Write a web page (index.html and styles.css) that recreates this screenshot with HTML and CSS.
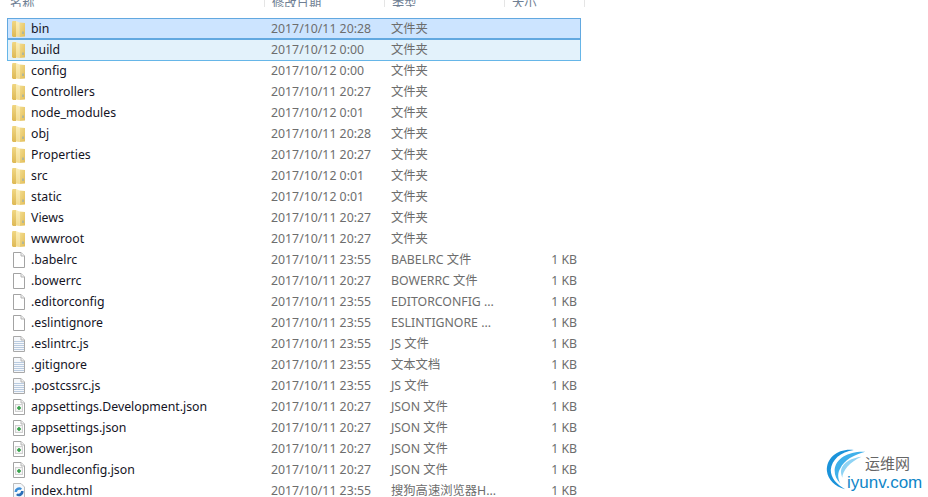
FILE: index.html
```html
<!DOCTYPE html>
<html lang="zh-CN">
<head>
    <meta charset="UTF-8">
    <title>文件列表</title>
    <link rel="stylesheet" href="styles.css">
</head>
<body>
    <svg class="icon-defs" width="0" height="0">
        <defs>
            <linearGradient id="folder-back" x1="0" y1="0" x2="0" y2="1">
                <stop offset="0" stop-color="#f0d682"/>
                <stop offset="1" stop-color="#deb956"/>
            </linearGradient>
            <linearGradient id="folder-mid" x1="0" y1="0" x2="0" y2="1">
                <stop offset="0" stop-color="#fbeeb8"/>
                <stop offset="1" stop-color="#f3dc90"/>
            </linearGradient>
            <linearGradient id="folder-right" x1="0" y1="0" x2="1" y2="1">
                <stop offset="0" stop-color="#f3dd8f"/>
                <stop offset="1" stop-color="#e2bd58"/>
            </linearGradient>
            <symbol id="i-folder" viewBox="0 0 16 16">
                <path d="M1 1.500 L1.500 0 H5 V16 H2 L1 15Z" fill="url(#folder-back)"/>
                <path d="M5 0 L8.500 1.500 V16 L5 15.500Z" fill="url(#folder-mid)"/>
                <path d="M8.500 1.500 L14 2 V15.500 L8.500 16Z" fill="url(#folder-right)"/>
                <path d="M11.500 10.500h1v2.500h-1z" fill="#7fa6c4"/>
            </symbol>
            <symbol id="i-file" viewBox="0 0 16 16">
                <path d="M2.500 0.500 H10 L13.500 4 V15.500 H2.500Z" fill="#fff" stroke="#a3a3a3"/>
                <path d="M10 0.500 V4 H13.500" fill="#efefef" stroke="#b5b5b5"/>
            </symbol>
            <symbol id="i-text" viewBox="0 0 16 16">
                <path d="M2.500 0.500 H10 L13.500 4 V15.500 H2.500Z" fill="#f6f8fb" stroke="#a9a9a9"/>
                <path d="M10 0.500 V4 H13.500" fill="#efefef" stroke="#b5b5b5"/>
                <path d="M3 5.500h10M3 7.500h10M3 9.500h10M3 11.500h10M3 13.500h10" stroke="#b9cbe0"/>
            </symbol>
            <symbol id="i-json" viewBox="0 0 16 16">
                <path d="M2.500 0.500 H10 L13.500 4 V15.500 H2.500Z" fill="#fff" stroke="#a3a3a3"/>
                <path d="M10 0.500 V4 H13.500" fill="#efefef" stroke="#b5b5b5"/>
                <rect x="4.500" y="5.500" width="7" height="7" fill="#f3f3f3" stroke="#d0d0d0"/>
                <path d="M8 7v4M6 9h4" stroke="#2f9e44" stroke-width="1.500"/>
            </symbol>
            <symbol id="i-html" viewBox="0 0 16 16">
                <path d="M2.500 0.500 H10 L13.500 4 V15.500 H2.500Z" fill="#f4f8fc" stroke="#bcbcbc"/>
                <path d="M3.500 9a4.500 4.500 0 0 1 7.500-3.500l-1.500 1.500a2.500 2.500 0 0 0-3.500 2Z" fill="#3d8ed8"/>
                <path d="M12.500 8a4.500 4.500 0 0 1-7.500 4l1.500-1.500a2.500 2.500 0 0 0 3.500-2.500Z" fill="#2a6fb8"/>
            </symbol>
        </defs>
    </svg>

    <div class="list-header">
        <span>名称</span>
        <span>修改日期</span>
        <span>类型</span>
        <span>大小</span>
    </div>

    <div class="file-list">
        <div class="row selected"><svg class="icon"><use href="#i-folder"/></svg><span class="name">bin</span><span class="date">2017/10/11 20:28</span><span class="type">文件夹</span><span class="size"></span></div>
        <div class="row selected-soft"><svg class="icon"><use href="#i-folder"/></svg><span class="name">build</span><span class="date">2017/10/12 0:00</span><span class="type">文件夹</span><span class="size"></span></div>
        <div class="row"><svg class="icon"><use href="#i-folder"/></svg><span class="name">config</span><span class="date">2017/10/12 0:00</span><span class="type">文件夹</span><span class="size"></span></div>
        <div class="row"><svg class="icon"><use href="#i-folder"/></svg><span class="name">Controllers</span><span class="date">2017/10/11 20:27</span><span class="type">文件夹</span><span class="size"></span></div>
        <div class="row"><svg class="icon"><use href="#i-folder"/></svg><span class="name">node_modules</span><span class="date">2017/10/12 0:01</span><span class="type">文件夹</span><span class="size"></span></div>
        <div class="row"><svg class="icon"><use href="#i-folder"/></svg><span class="name">obj</span><span class="date">2017/10/11 20:28</span><span class="type">文件夹</span><span class="size"></span></div>
        <div class="row"><svg class="icon"><use href="#i-folder"/></svg><span class="name">Properties</span><span class="date">2017/10/11 20:27</span><span class="type">文件夹</span><span class="size"></span></div>
        <div class="row"><svg class="icon"><use href="#i-folder"/></svg><span class="name">src</span><span class="date">2017/10/12 0:01</span><span class="type">文件夹</span><span class="size"></span></div>
        <div class="row"><svg class="icon"><use href="#i-folder"/></svg><span class="name">static</span><span class="date">2017/10/12 0:01</span><span class="type">文件夹</span><span class="size"></span></div>
        <div class="row"><svg class="icon"><use href="#i-folder"/></svg><span class="name">Views</span><span class="date">2017/10/11 20:27</span><span class="type">文件夹</span><span class="size"></span></div>
        <div class="row"><svg class="icon"><use href="#i-folder"/></svg><span class="name">wwwroot</span><span class="date">2017/10/11 20:27</span><span class="type">文件夹</span><span class="size"></span></div>
        <div class="row"><svg class="icon"><use href="#i-file"/></svg><span class="name">.babelrc</span><span class="date">2017/10/11 23:55</span><span class="type">BABELRC 文件</span><span class="size">1 KB</span></div>
        <div class="row"><svg class="icon"><use href="#i-file"/></svg><span class="name">.bowerrc</span><span class="date">2017/10/11 20:27</span><span class="type">BOWERRC 文件</span><span class="size">1 KB</span></div>
        <div class="row"><svg class="icon"><use href="#i-file"/></svg><span class="name">.editorconfig</span><span class="date">2017/10/11 23:55</span><span class="type">EDITORCONFIG ...</span><span class="size">1 KB</span></div>
        <div class="row"><svg class="icon"><use href="#i-file"/></svg><span class="name">.eslintignore</span><span class="date">2017/10/11 23:55</span><span class="type">ESLINTIGNORE ...</span><span class="size">1 KB</span></div>
        <div class="row"><svg class="icon"><use href="#i-text"/></svg><span class="name">.eslintrc.js</span><span class="date">2017/10/11 23:55</span><span class="type">JS 文件</span><span class="size">1 KB</span></div>
        <div class="row"><svg class="icon"><use href="#i-text"/></svg><span class="name">.gitignore</span><span class="date">2017/10/11 23:55</span><span class="type">文本文档</span><span class="size">1 KB</span></div>
        <div class="row"><svg class="icon"><use href="#i-text"/></svg><span class="name">.postcssrc.js</span><span class="date">2017/10/11 23:55</span><span class="type">JS 文件</span><span class="size">1 KB</span></div>
        <div class="row"><svg class="icon"><use href="#i-json"/></svg><span class="name">appsettings.Development.json</span><span class="date">2017/10/11 20:27</span><span class="type">JSON 文件</span><span class="size">1 KB</span></div>
        <div class="row"><svg class="icon"><use href="#i-json"/></svg><span class="name">appsettings.json</span><span class="date">2017/10/11 20:27</span><span class="type">JSON 文件</span><span class="size">1 KB</span></div>
        <div class="row"><svg class="icon"><use href="#i-json"/></svg><span class="name">bower.json</span><span class="date">2017/10/11 20:27</span><span class="type">JSON 文件</span><span class="size">1 KB</span></div>
        <div class="row"><svg class="icon"><use href="#i-json"/></svg><span class="name">bundleconfig.json</span><span class="date">2017/10/11 20:27</span><span class="type">JSON 文件</span><span class="size">1 KB</span></div>
        <div class="row"><svg class="icon"><use href="#i-html"/></svg><span class="name">index.html</span><span class="date">2017/10/11 23:55</span><span class="type">搜狗高速浏览器H...</span><span class="size">1 KB</span></div>
    </div>

    <!-- watermark, bottom right -->
    <div class="watermark">
        <svg class="watermark-logo" viewBox="0 0 50 50">
            <path d="M30 2 C14 0 1 10 2 24 C3 33 10 40 21 43 C12 38 6 31 6 23 C7 12 16 4 30 2Z" fill="#1b93da"/>
            <path d="M42 4 C26 3 11 10 10 23 C10 29 12 33 16 37 C13 31 13 26 16 21 C20 13 30 7 42 4Z" fill="#3fb0ea"/>
            <path d="M38 9 C28 10 19 15 17 22 C16 25 17 28 18 31 C18 24 26 14 38 9Z" fill="#8fd3f4"/>
        </svg>
        <span class="watermark-cn">运维网</span>
        <span class="watermark-en">iyunv.com</span>
    </div>
</body>
</html>
```

FILE: styles.css
```css
* {
    box-sizing: border-box;
}

html, body {
    height: 100%;
}

body {
    margin: 0;
    background-color: #ffffff;
    font-family: "Noto Sans", "Noto Sans CJK SC", sans-serif;
    font-size: 12.3px;
    color: #1e1e1e;
    overflow: hidden;
    position: relative;
}

.icon-defs {
    display: block;
}

/* column titles are cut by the top edge, as in the window capture */
.list-header {
    display: grid;
    grid-template-columns: 265px 120px 120px 80px;
    height: 7px;
    overflow: hidden;
    color: #6f7f94;
    line-height: 7px;
}

.list-header span {
    padding-left: 7px;
    border-right: 1px solid #e5e5e5;
    height: 7px;
}

.list-header span:first-child {
    padding-left: 10px;
}

.file-list {
    margin-top: 11px;
    width: 574px;
    margin-left: 7px;
}

.row {
    display: grid;
    grid-template-columns: 16px 244px 120px 120px 70px;
    align-items: center;
    height: 21px;
    padding-left: 4px;
    line-height: 21px;
    white-space: nowrap;
}

.selected {
    position: relative;
    z-index: 1;
    background-color: #cce4ff;
    box-shadow: inset 0 0 0 1px #62a8e0, 0 1px 0 #62a8e0;
}

.selected-soft {
    background-color: #e3f2fb;
    box-shadow: inset 1px 0 0 #66b6e8, inset -1px 0 0 #66b6e8, 0 1px 0 #66b6e8;
}

.icon {
    width: 16px;
    height: 16px;
}

.name {
    padding-left: 4px;
    color: #14141f;
}

.date,
.type,
.size {
    color: #6d6d6d;
}

.size {
    text-align: right;
    padding-right: 4px;
    margin-left: -1px;
}

.watermark {
    position: absolute;
    left: 825px;
    top: 448px;
    width: 103px;
    height: 48px;
}

.watermark-logo {
    position: absolute;
    left: 0;
    top: 0;
    width: 48px;
    height: 48px;
}

.watermark-cn {
    position: absolute;
    left: 40px;
    top: 6px;
    font-size: 15px;
    line-height: 18px;
    color: #666666;
}

.watermark-en {
    position: absolute;
    left: 22px;
    top: 25px;
    font-family: "Liberation Sans", sans-serif;
    font-size: 17px;
    line-height: 20px;
    color: #0f86c8;
}
```
